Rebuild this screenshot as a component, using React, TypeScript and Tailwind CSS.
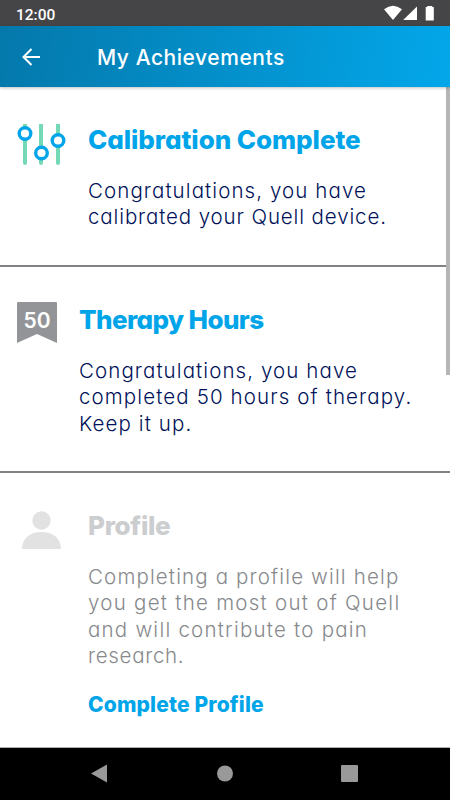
import type { ReactNode } from "react";

function StatusBar() {
  return (
    <div className="flex h-[26px] shrink-0 items-center justify-between bg-[#454547] pr-[15px] pl-4">
      <span className="pt-[4px] font-[Roboto] text-[15.5px] leading-5 font-medium text-white">12:00</span>
      <svg width="51" height="16" viewBox="0 0 51 16" fill="#fff">
        <path d="M0 4.2Q9 -2.8 18 4.2L9 15Z" />
        <path d="M33 1.5V15H19.2Z" />
        <path d="M43.300 1h5v1h1.5v13a.6.6 0 0 1-.6.6h-6.900a.6.6 0 0 1-.6-.6V2h1.600Z" />
      </svg>
    </div>
  );
}

function Header() {
  return (
    <header className="z-10 flex h-[61px] shrink-0 items-center bg-[linear-gradient(100deg,#0478ab,#03a7ea)] pl-[22px] text-white shadow-[0_1px_3px_rgba(0,0,0,0.25)]">
      <button aria-label="Back">
        <svg width="18" height="18" viewBox="0 0 18 18" fill="none" stroke="#fff" strokeWidth="2">
          <path d="M18 9H1.500M9.500 1L1.500 9L9.500 17" />
        </svg>
      </button>
      <h1 className="ml-[57px] pt-[3px] text-[21px] font-medium tracking-[0.55px]">My Achievements</h1>
    </header>
  );
}

function CalibrationIcon() {
  return (
    <svg width="50" height="44" viewBox="0 0 50 44" fill="#fff">
      <path d="M8 1V39M24 1V39M41 1V39" stroke="#74d9b5" strokeWidth="4" strokeLinecap="round" />
      <g stroke="#00a5e9" strokeWidth="3.400">
        <circle cx="8" cy="9.500" r="5.800" />
        <circle cx="24.500" cy="29" r="5.800" />
        <circle cx="41" cy="16.500" r="5.800" />
      </g>
    </svg>
  );
}

function RibbonIcon() {
  return (
    <svg width="40" height="42" viewBox="0 0 40 42">
      <path d="M1 0H39Q40 0 40 1V41L20 32L0 41V1Q0 0 1 0Z" fill="#929497" />
      <text x="20" y="25.500" textAnchor="middle" textLength="27" fontSize="21" fontWeight="600" fill="#fff">
        50
      </text>
    </svg>
  );
}

function PersonIcon() {
  return (
    <svg width="40" height="39" viewBox="0 0 40 39" fill="#e2e2e2">
      <circle cx="19.500" cy="9.500" r="9.200" />
      <path d="M0 36.500C1 27 8 21 19.500 21S38 27 39 36.500Q39 38 37.500 38H1.500Q0 38 0 36.500Z" />
    </svg>
  );
}

interface AchievementProps {
  icon: ReactNode;
  title: ReactNode;
  children: ReactNode;
  className: string;
}

function Achievement({ icon, title, children, className }: AchievementProps) {
  return (
    <section className={`flex shrink-0 items-start ${className}`}>
      {icon}
      <div>
        <h2 className="text-[26px] leading-8 font-extrabold">{title}</h2>
        <div className="mt-[22px] text-[20.500px] leading-[26.400px] font-light whitespace-nowrap">{children}</div>
      </div>
    </section>
  );
}

export default function App() {
  return (
    <div className="flex h-[800px] w-[450px] flex-col overflow-hidden bg-white font-['Inter','Liberation_Sans',sans-serif] [font-feature-settings:'cv11']">
      <StatusBar />
      <Header />
      <main className="relative flex min-h-0 flex-1 flex-col overflow-hidden border-b border-[#b0b0b0]">
        <Achievement
          className="h-[180px] border-b-2 border-[#808285] pt-[37px] pl-[17px] text-[#001259]"
          icon={<div className="w-[71px] shrink-0"><CalibrationIcon /></div>}
          title={<span className="tracking-[-0.07px] text-[#00a5e9]">Calibration Complete</span>}
        >
          <p className="tracking-[1.09px]">Congratulations, you have</p>
          <p className="tracking-[0.88px]">calibrated your Quell device.</p>
        </Achievement>
        <Achievement
          className="h-[206px] border-b-2 border-[#808285] pt-[37px] pl-[17px] text-[#001259]"
          icon={<div className="-mt-[2px] w-[62px] shrink-0"><RibbonIcon /></div>}
          title={<span className="tracking-[-0.6px] text-[#00a5e9]">Therapy Hours</span>}
        >
          <p className="tracking-[1.09px]">Congratulations, you have</p>
          <p className="tracking-[1.12px]">completed 50 hours of therapy.</p>
          <p className="tracking-[1.1px]">Keep it up.</p>
        </Achievement>
        <Achievement
          className="pt-[37px] pl-[22px] text-[#87898c]"
          icon={<div className="mt-[1px] w-[66px] shrink-0"><PersonIcon /></div>}
          title={<span className="tracking-[-0.3px] text-[#cccdcf]">Profile</span>}
        >
          <p className="tracking-[1.15px]">Completing a profile will help</p>
          <p className="tracking-[1.27px]">you get the most out of Quell</p>
          <p className="tracking-[1.23px]">and will contribute to pain</p>
          <p className="tracking-[0.7px]">research.</p>
          <button className="mt-[22px] text-[21px] font-extrabold tracking-[0.15px] text-[#00a5e9]">Complete Profile</button>
        </Achievement>
        <div className="absolute top-0 right-0 h-[288px] w-1 bg-[#b5b5b5]" />
      </main>
      <nav className="flex h-[52px] shrink-0 items-center bg-black">
        <svg width="450" height="52" viewBox="0 0 450 52" fill="#999">
          <path d="M91 25.500L107 16.500V34.500Z" />
          <circle cx="225" cy="25.500" r="8" />
          <rect x="341" y="17" width="17" height="17" rx="1" />
        </svg>
      </nav>
    </div>
  );
}
